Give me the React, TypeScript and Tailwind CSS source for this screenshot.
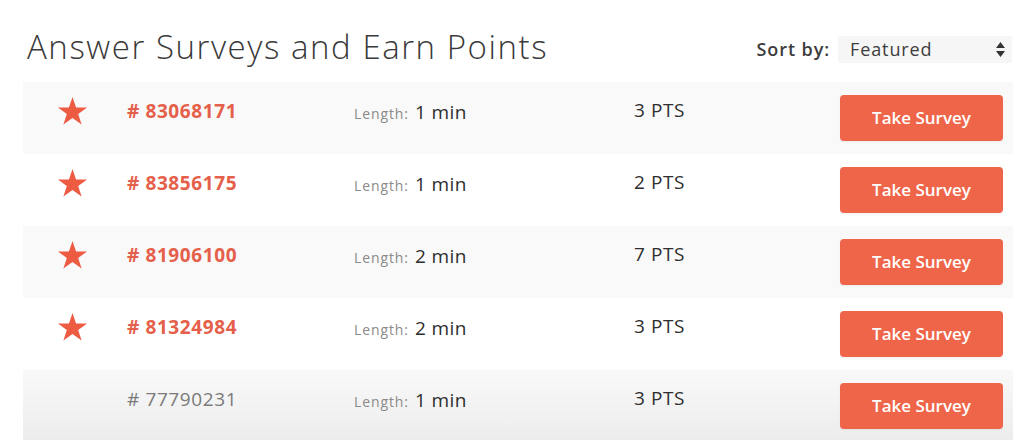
import { useState } from "react";

interface Survey {
  id: string;
  length: number;
  points: number;
  featured: boolean;
}

const surveys: Survey[] = [
  { id: "83068171", length: 1, points: 3, featured: true },
  { id: "83856175", length: 1, points: 2, featured: true },
  { id: "81906100", length: 2, points: 7, featured: true },
  { id: "81324984", length: 2, points: 3, featured: true },
  { id: "77790231", length: 1, points: 3, featured: false },
];

function Star() {
  return (
    <svg width="31" height="30" viewBox="0 0 24 23" className="text-[#ee5b43]">
      <path
        fill="currentColor"
        d="M12 0.6l2.75 8.1h8.55l-6.9 5.05 2.65 8.15L12 16.85 4.95 21.9l2.65-8.15L0.7 8.7h8.55z"
      />
    </svg>
  );
}

export default function App() {
  const [sort, setSort] = useState("Featured");

  return (
    <div className="w-[1024px] h-[440px] overflow-hidden bg-white font-['Open_Sans','Liberation_Sans',sans-serif]">
      <div className="flex items-center justify-between h-[82px] pl-[27px] pr-[12px] pt-[12px]">
        <h1 className="text-[33px] font-light text-[#3a3a3a] tracking-[1.55px]">
          Answer Surveys and Earn Points
        </h1>
        <div className="flex items-center gap-[8px] pt-[4px]">
          <span className="text-[18px] font-semibold text-[#3c3c3c] tracking-[0.9px]">Sort by:</span>
          <div className="relative w-[174px] h-[27px] bg-[#f6f6f6] rounded-[3px] flex items-center pl-[12px]">
            <select
              value={sort}
              onChange={(e) => setSort(e.target.value)}
              className="appearance-none bg-transparent text-[18px] text-[#3c3c3c] tracking-[0.9px] w-full outline-none"
            >
              <option>Featured</option>
              <option>Points</option>
              <option>Length</option>
            </select>
            <svg className="absolute right-[7px] top-[6px]" width="9" height="15" viewBox="0 0 9 15">
              <path d="M4.5 0L9 6H0z M4.5 15L0 9h9z" fill="#333" />
            </svg>
          </div>
        </div>
      </div>

      <div className="ml-[23px] mr-[11px]">
        {surveys.map((s, i) => (
          <div
            key={s.id}
            className={`flex items-center h-[72px] ${
              i === 4
                ? "bg-gradient-to-b from-[#f9f9f9] to-[#ececec]"
                : i % 2 === 0
                  ? "bg-[#f9f9f9]"
                  : "bg-white"
            }`}
          >
            <div className="w-[104px] flex justify-center pr-[6px] pb-[14px]">
              {s.featured && <Star />}
            </div>
            <div
              className={`w-[227px] text-[19px] pb-[14px] tracking-[0.6px] ${
                s.featured ? "font-bold text-[#e5604a]" : "text-[#7a7a7a]"
              }`}
            >
              # {s.id}
            </div>
            <div className="w-[280px] pb-[12px] flex items-baseline gap-[6px]">
              <span className="text-[14px] text-[#8a8a8a] tracking-[0.9px]">Length:</span>
              <span className="text-[19px] text-[#2e2e2e] tracking-[0.4px]">{s.length} min</span>
            </div>
            <div className="w-[206px] pb-[16px] text-[19px] text-[#2e2e2e] tracking-[0.6px]">{s.points} PTS</div>
            <button className="w-[163px] h-[46px] rounded-[4px] bg-[#ef654a] text-white text-[17px] font-semibold shadow-[0_1px_2px_rgba(0,0,0,0.06)]">
              Take Survey
            </button>
          </div>
        ))}
      </div>
    </div>
  );
}
